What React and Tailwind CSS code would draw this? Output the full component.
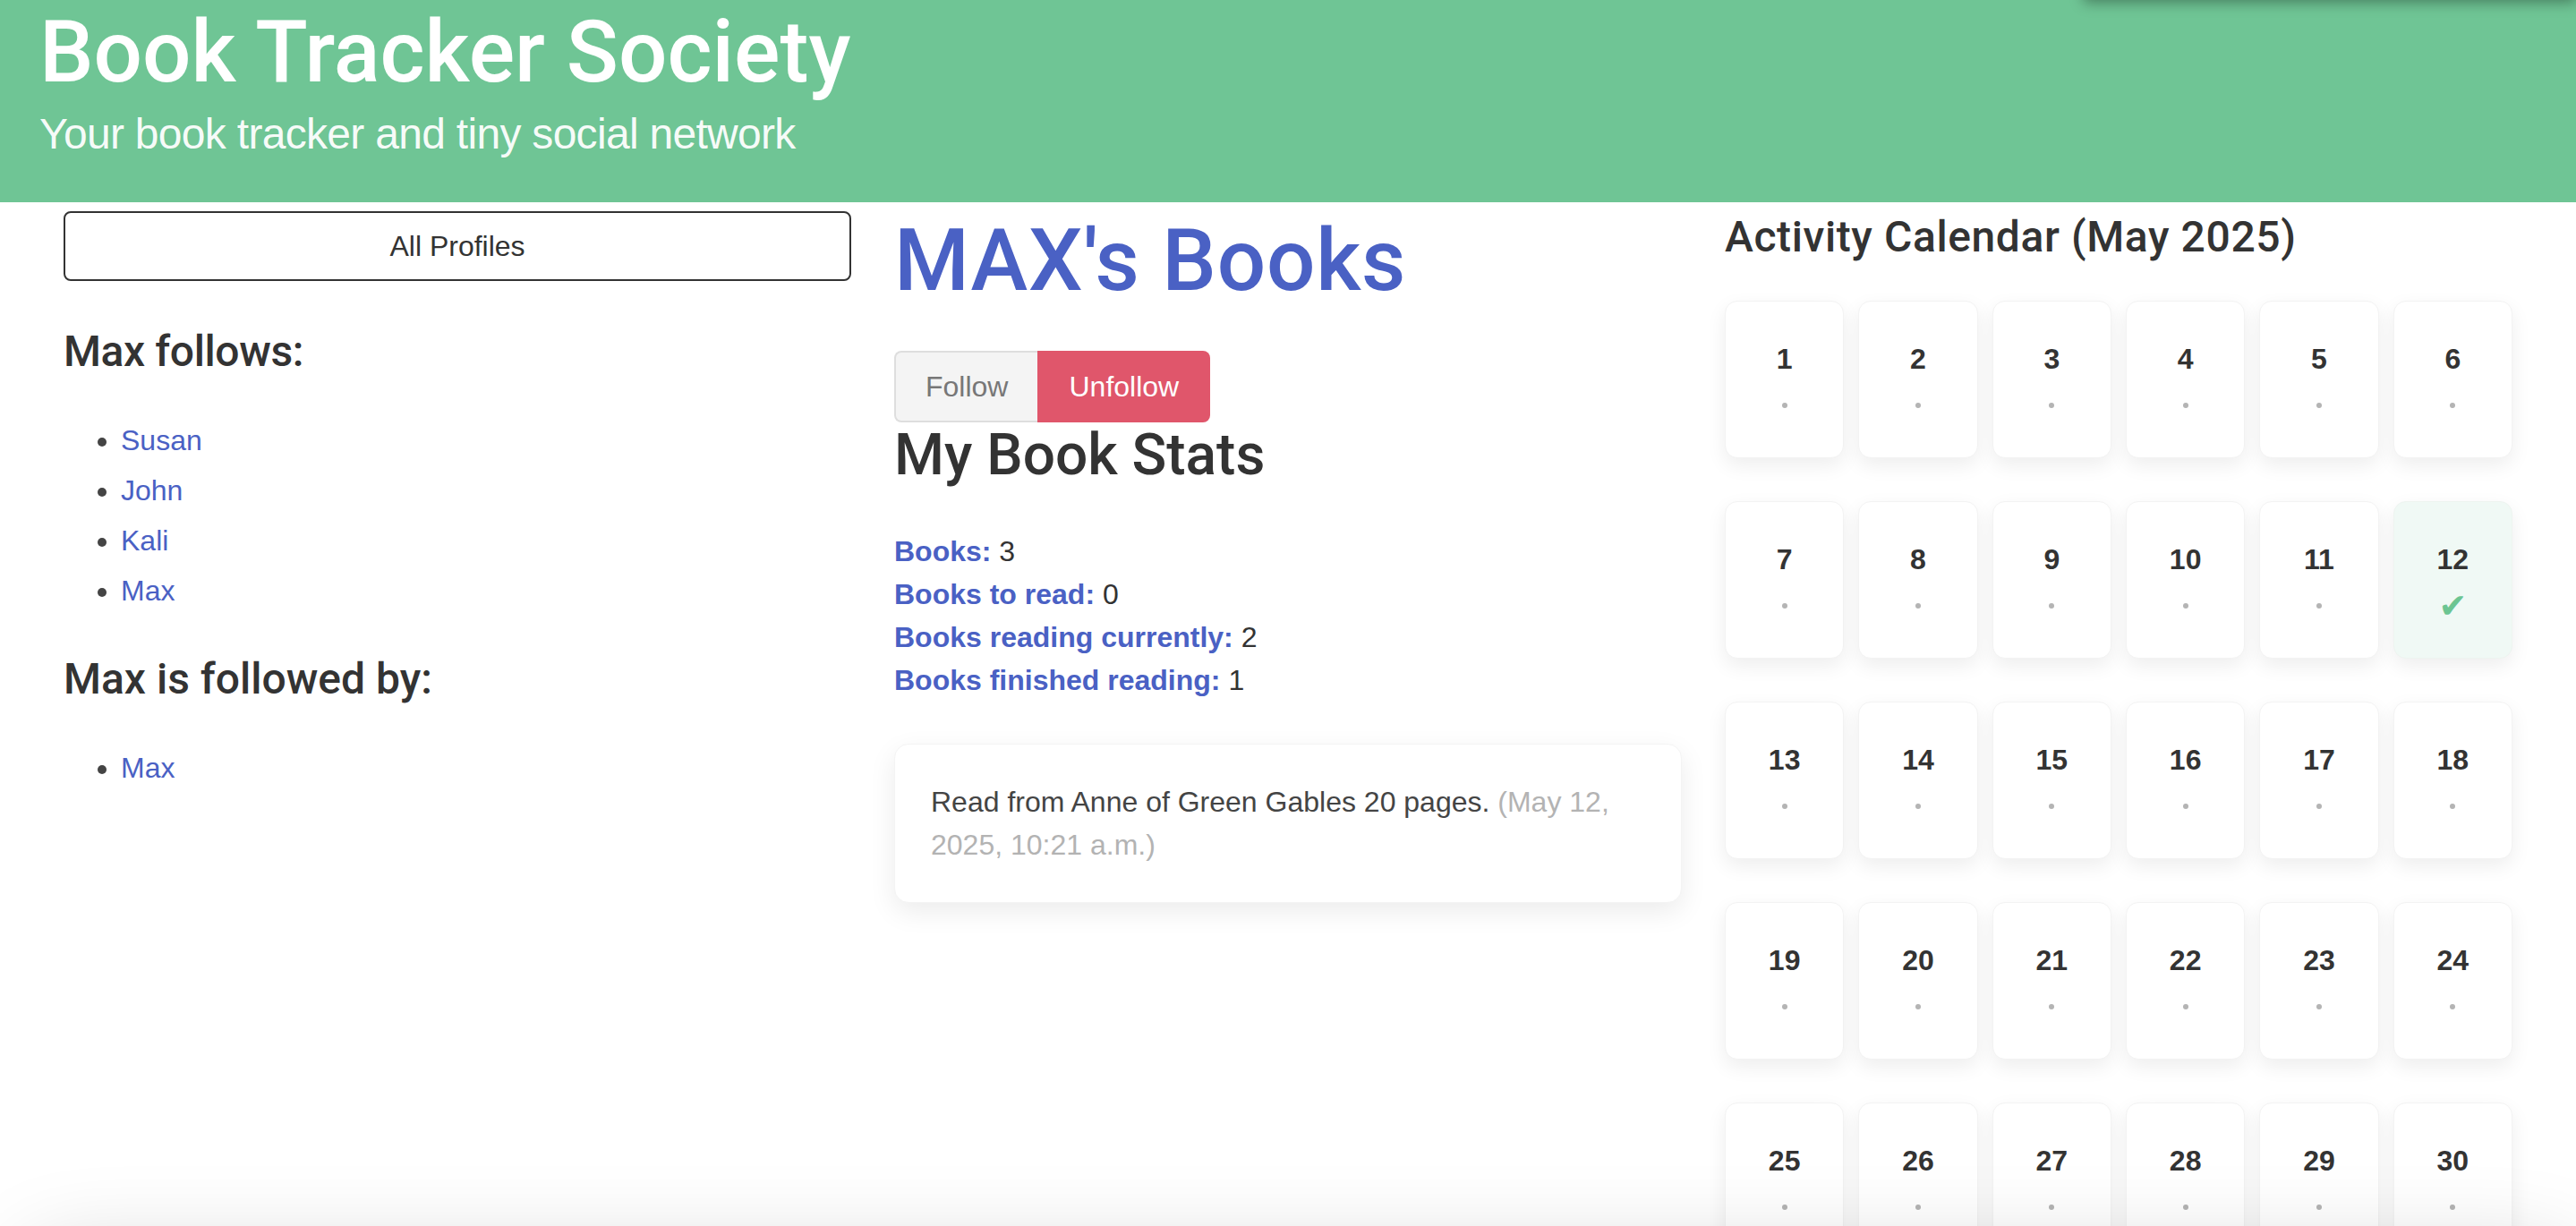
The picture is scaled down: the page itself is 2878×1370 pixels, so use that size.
import React from 'react';

const follows = ['Susan', 'John', 'Kali', 'Max'];
const followedBy = ['Max'];
const stats = [
  ['Books:', '3'],
  ['Books to read:', '0'],
  ['Books reading currently:', '2'],
  ['Books finished reading:', '1'],
];
const days = Array.from({ length: 31 }, (_, i) => i + 1);
const activeDays = [12];

function DayCell({ day, active }) {
  return (
    <div
      className={
        active
          ? 'h-[176px] rounded-[14px] bg-[#f0f9f5] border border-[#eef4f0] shadow-[0_8px_22px_rgba(0,0,0,0.07)] flex flex-col items-center pt-[40px]'
          : 'h-[176px] rounded-[14px] bg-white border border-[#f3f3f3] shadow-[0_8px_22px_rgba(0,0,0,0.07)] flex flex-col items-center pt-[40px]'
      }
    >
      <div className="text-[32px] leading-[48px] font-bold text-[#333]">{day}</div>
      <div className="mt-[4px] h-[48px] flex items-center justify-center">
        {active ? (
          <span className="text-[38px] leading-none text-[#6cc592] font-['DejaVu_Sans',sans-serif]">✔</span>
        ) : (
          <span className="block w-[6px] h-[6px] rounded-full bg-[#b4b4b4]"></span>
        )}
      </div>
    </div>
  );
}

function PeopleList({ names }) {
  return (
    <ul className="mt-[42px] pl-[64px] list-disc marker:text-[#444]">
      {names.map((name, i) => (
        <li key={i} className="text-[32px] leading-[56px] text-[#333]">
          <a href="#" className="text-[#4a61c4]">{name}</a>
        </li>
      ))}
    </ul>
  );
}

export default function App() {
  return (
    <div className="relative min-h-screen bg-white font-['Liberation_Sans',Arial,sans-serif] text-[#333]">
      {/* header */}
      <header className="h-[226px] bg-[#6fc595] px-[44px] pt-[3px] text-white">
        <h1 className="font-['Roboto',sans-serif] text-[96px] leading-[111px] font-medium">Book Tracker Society</h1>
        <p className="text-[48px] leading-[72px] tracking-[-0.7px] text-white/95">Your book tracker and tiny social network</p>
      </header>

      {/* menu shadow peeking from above */}
      <div className="absolute right-0 top-[-60px] h-[60px] w-[550px] bg-[#5f9f7b] shadow-[0_3px_14px_rgba(0,0,0,0.35)]"></div>

      <main className="grid grid-cols-3 gap-x-[48px] px-[71px] pt-[10px]">
        {/* profiles */}
        <section>
          <button className="w-full h-[78px] rounded-[8px] border-2 border-[#333] bg-white text-[32px] text-[#333]">
            All Profiles
          </button>
          <h4 className="mt-[50px] font-['Roboto',sans-serif] text-[48px] leading-[58px] font-medium tracking-[-0.4px] text-[#333]">Max follows:</h4>
          <PeopleList names={follows} />
          <h4 className="mt-[42px] font-['Roboto',sans-serif] text-[48px] leading-[58px] font-medium text-[#333]">Max is followed by:</h4>
          <PeopleList names={followedBy} />
        </section>

        {/* books */}
        <section>
          <h1 className="font-['Roboto',sans-serif] text-[96px] leading-[111px] font-medium tracking-[0.8px] text-[#4a61c4]">MAX's Books</h1>
          <div className="mt-[45px] flex">
            <button className="h-[80px] px-[33px] rounded-l-[8px] border-2 border-r-0 border-[#dedede] bg-[#f4f4f4] text-[32px] text-[#777]">
              Follow
            </button>
            <button className="h-[80px] px-[35px] rounded-r-[8px] bg-[#e0566b] text-[32px] text-white">
              Unfollow
            </button>
          </div>
          <h2 className="font-['Roboto',sans-serif] text-[64px] leading-[74px] font-medium text-[#333]">My Book Stats</h2>
          <div className="mt-[46px] text-[32px] leading-[48px]">
            {stats.map(([label, value]) => (
              <p key={label}>
                <span className="font-bold text-[#4a61c4]">{label}</span> <span className="text-[#333]">{value}</span>
              </p>
            ))}
          </div>
          <div className="mt-[47px] rounded-[16px] bg-white border border-[#f4f4f4] p-[40px] shadow-[0_10px_30px_rgba(0,0,0,0.08)] text-[32px] leading-[48px]">
            <span className="text-[#444]">Read from Anne of Green Gables 20 pages.</span>{' '}
            <span className="text-[#b3b3b3]">(May 12, 2025, 10:21 a.m.)</span>
          </div>
        </section>

        {/* calendar */}
        <section>
          <h3 className="font-['Roboto',sans-serif] text-[48px] leading-[58px] font-medium tracking-[0.6px] text-[#333]">Activity Calendar (May 2025)</h3>
          <div className="mt-[42px] grid grid-cols-6 gap-x-[16px] gap-y-[48px]">
            {days.map((d) => (
              <DayCell key={d} day={d} active={activeDays.includes(d)} />
            ))}
          </div>
        </section>
      </main>

      {/* sheet below the fold casting its shadow */}
      <div className="fixed left-[30px] right-0 top-[1400px] h-[300px] rounded-[40px] bg-white shadow-[0_0_100px_rgba(0,0,0,0.18)]"></div>
    </div>
  );
}
